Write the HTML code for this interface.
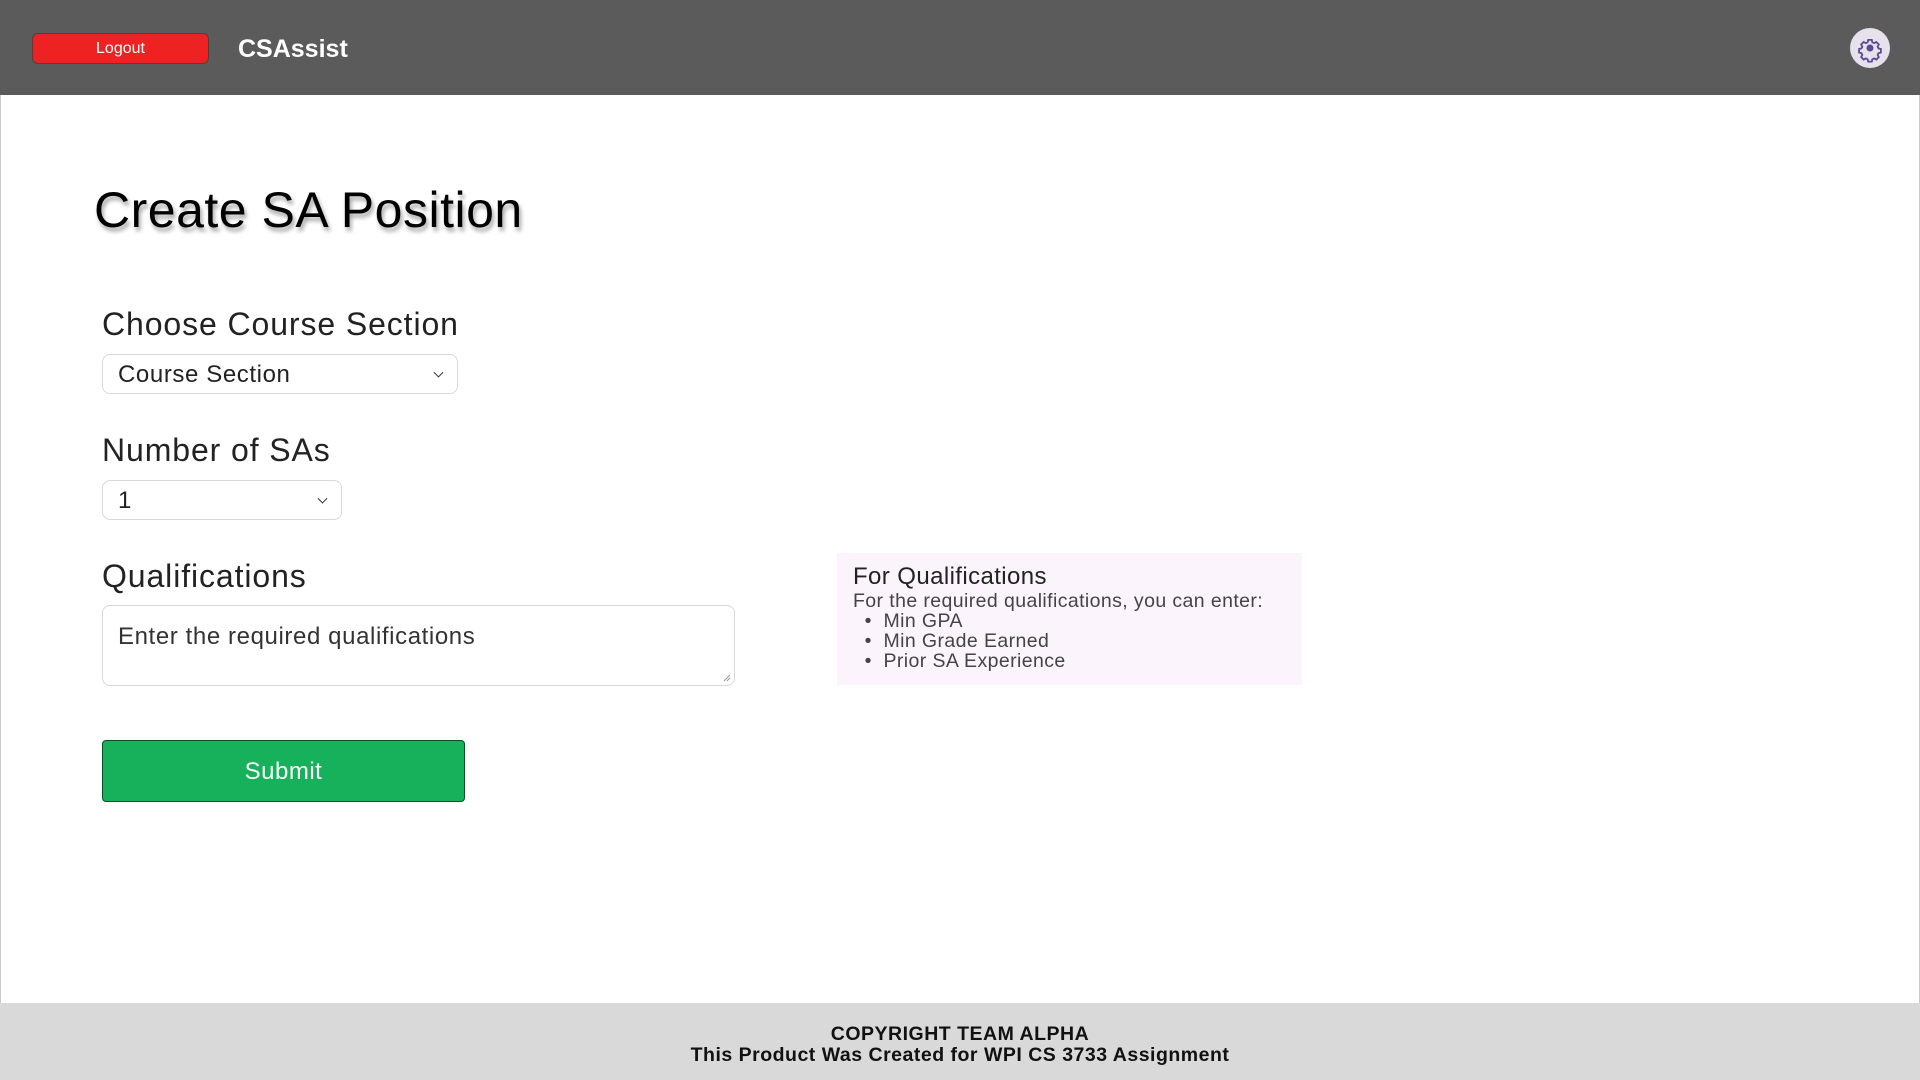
<!DOCTYPE html>
<html><head><style>
*{box-sizing:border-box;margin:0;padding:0}
body{width:1920px;height:1080px;overflow:hidden;font-family:"Liberation Sans",sans-serif;background:#fff;position:relative}
.hdr{position:absolute;left:0;top:0;width:1920px;height:95px;background:#5b5b5b}
.logout{position:absolute;left:32px;top:33px;width:177px;height:31px;background:#ee2222;border:1px solid #444;border-radius:6px;color:#fff;font-size:16px;text-align:center;line-height:29px}
.brand{position:absolute;left:238px;top:35px;color:#fff;font-weight:bold;font-size:25px}
.gear{position:absolute;left:1850px;top:28px;width:40px;height:40px;border-radius:50%;background:#e6e1ec}
.main{position:absolute;left:0;top:95px;width:1920px;height:908px;border-left:1px solid #ccc;border-right:1px solid #ccc}
.abs{position:absolute}
h1{position:absolute;left:94px;top:181px;font-size:50px;font-weight:normal;color:#000;text-shadow:2px 4px 4px rgba(0,0,0,.35);letter-spacing:0.5px}
.lbl{position:absolute;left:102px;font-size:32px;color:#222;letter-spacing:0.9px}
.sel{position:absolute;left:102px;border:1px solid #d8d8d8;border-radius:8px;font-size:24px;color:#222;padding-left:15px;letter-spacing:0.6px}
.chev{position:absolute;top:50%;width:7px;height:7px;border-right:1.5px solid #333;border-bottom:1.5px solid #333;transform:translateY(-70%) rotate(45deg)}
.info{position:absolute;left:837px;top:553px;width:465px;height:132px;background:#fcf4fc;padding:10px 16px;letter-spacing:0.4px}
.foot{position:absolute;left:0;top:1003px;width:1920px;height:77px;background:#d9d9d9;text-align:center;font-weight:bold;font-size:19.5px;color:#111;padding-top:21px;line-height:21px;letter-spacing:0.5px}
</style></head><body>
<div class="hdr">
<div class="logout">Logout</div>
<div class="brand">CSAssist</div>
<div class="gear"><svg width="40" height="40" viewBox="0 0 40 40"><g fill="none" stroke="#5a4a8f" stroke-width="2"><path d="M18 11h4l.6 2.6 2 1 2.4-1.3 2.8 2.8-1.3 2.4 1 2 2.6.6v4l-2.6.6-1 2 1.3 2.4-2.8 2.8-2.4-1.3-2 1-.6 2.6h-4l-.6-2.6-2-1-2.4 1.3-2.8-2.8 1.3-2.4-1-2-2.6-.6v-4l2.6-.6 1-2-1.3-2.4 2.8-2.8 2.4 1.3 2-1z" transform="translate(0,-1) scale(0.9) translate(2.2,3.3)"/></g><circle cx="20" cy="20" r="3.5" fill="#5a4a8f"/></svg></div>
</div>
<div class="main"></div>
<h1>Create SA Position</h1>
<div class="lbl" style="top:306px">Choose Course Section</div>
<div class="sel" style="top:354px;width:356px;height:40px;line-height:39px">Course Section<span class="chev" style="left:332px"></span></div>
<div class="lbl" style="top:432px">Number of SAs</div>
<div class="sel" style="top:480px;width:240px;height:40px;line-height:39px">1<span class="chev" style="left:216px"></span></div>
<div class="lbl" style="top:558px">Qualifications</div>
<div class="sel" style="top:605px;width:633px;height:81px;line-height:62px;color:#333">Enter the required qualifications
<svg class="abs" style="right:3px;bottom:3px" width="8" height="8"><path d="M1 7L7 1M4 7L7 4" stroke="#999" stroke-width="1"/></svg></div>
<div class="abs" style="left:102px;top:740px;width:363px;height:62px;background:#17b05b;border:1px solid #0c4d2a;border-radius:4px;color:#fff;font-size:24px;text-align:center;line-height:62px;letter-spacing:0.5px">Submit</div>
<div class="info">
<div style="font-size:24px;color:#222;line-height:28px">For Qualifications</div>
<div style="font-size:19.5px;color:#444;line-height:20px">For the required qualifications, you can enter:<br>
&nbsp;&nbsp;•&nbsp;&nbsp;Min GPA<br>&nbsp;&nbsp;•&nbsp;&nbsp;Min Grade Earned<br>&nbsp;&nbsp;•&nbsp;&nbsp;Prior SA Experience</div>
</div>
<div class="foot">COPYRIGHT TEAM ALPHA<br>This Product Was Created for WPI CS 3733 Assignment</div>
</body></html>
